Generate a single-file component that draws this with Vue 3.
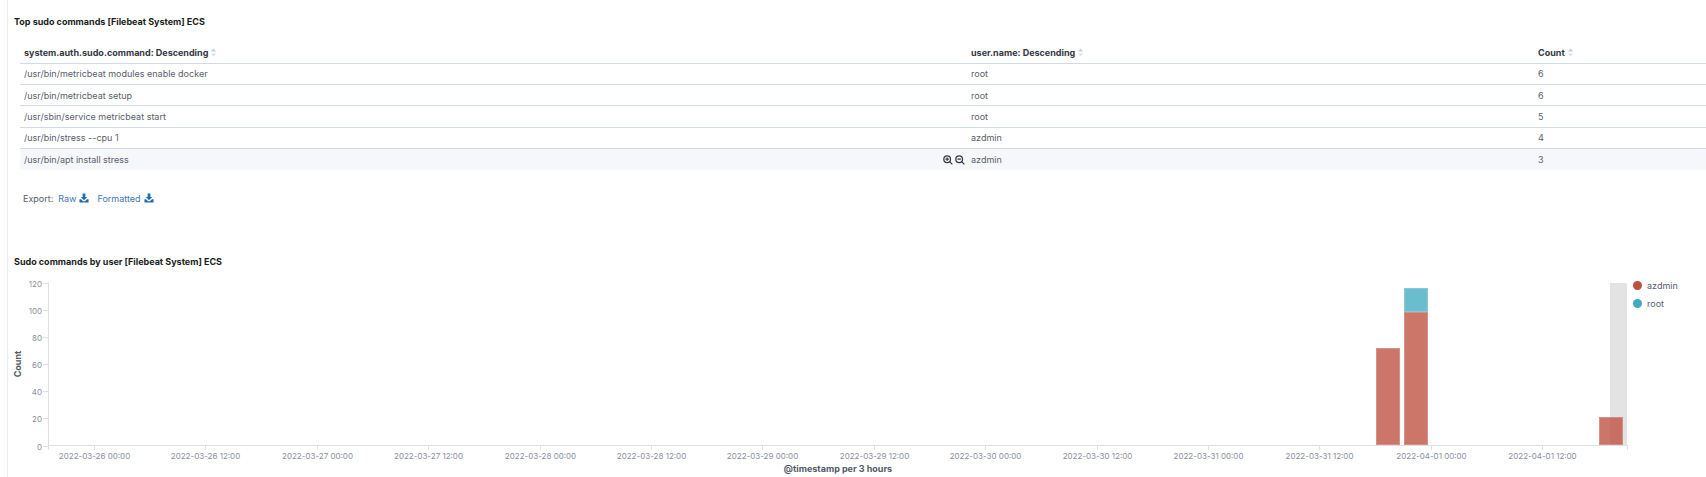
<template>
    <div class="page">
        <section class="panel-top">
            <h2 class="panel-title">Top sudo commands [Filebeat System] ECS</h2>
            <table class="data-table">
                <thead>
                    <tr>
                        <th v-for="col in columns" :key="col">
                            <span class="th-inner">
                                {{ col }}
                                <svg class="sort-icon" width="7" height="9" viewBox="0 0 7 10">
                                    <path d="M3.5 0.5 L6.5 4 L0.5 4 Z" fill="#c9d0dc" />
                                    <path d="M3.5 9.5 L6.5 6 L0.5 6 Z" fill="#dfe3ea" />
                                </svg>
                            </span>
                        </th>
                    </tr>
                </thead>
                <tbody>
                    <tr v-for="(row, i) in rows" :key="i" :class="{ hovered: i === rows.length - 1 }">
                        <td class="cell-command">
                            <span>{{ row.command }}</span>
                            <span v-if="i === rows.length - 1" class="filter-icons">
                                <svg width="10" height="10" viewBox="0 0 12 12" fill="none" stroke="#343741" stroke-width="1.5">
                                    <circle cx="5" cy="5" r="4" />
                                    <path d="M8 8 L11.2 11.2 M3 5 H7 M5 3 V7" />
                                </svg>
                                <svg width="10" height="10" viewBox="0 0 12 12" fill="none" stroke="#343741" stroke-width="1.5">
                                    <circle cx="5" cy="5" r="4" />
                                    <path d="M8 8 L11.2 11.2 M3 5 H7" />
                                </svg>
                            </span>
                        </td>
                        <td>{{ row.user }}</td>
                        <td>{{ row.count }}</td>
                    </tr>
                </tbody>
            </table>
            <div class="export-row">
                <span class="export-label">Export:</span>
                <a v-for="name in ['Raw', 'Formatted']" :key="name" class="export-link">
                    {{ name }}
                    <svg width="10" height="10" viewBox="0 0 11 11" fill="#1f6bb5">
                        <path d="M4 0.5 H7 V4.5 H9 L5.5 8 L2 4.5 H4 Z" />
                        <path d="M0.5 7 H2.2 L4.5 9 H6.5 L8.8 7 H10.5 V10.5 H0.5 Z" />
                    </svg>
                </a>
            </div>
        </section>

        <section class="panel-chart">
            <h2 class="panel-title">Sudo commands by user [Filebeat System] ECS</h2>
            <div class="chart-wrap">
                <svg class="chart" width="1621" height="212" viewBox="8 270 1621 212">
                    <!-- highlighted bucket sits behind the bars -->
                    <rect x="1610" y="284" width="17" height="162" fill="#e3e3e3" />

                    <g v-for="bar in bars" :key="bar.x + bar.fill">
                        <rect
                            :x="bar.x"
                            :y="bar.y"
                            width="24"
                            :height="bar.h"
                            :fill="bar.fill"
                            fill-opacity="0.78"
                        />
                        <rect
                            :x="bar.x + 0.5"
                            :y="bar.y + 0.5"
                            width="23"
                            :height="bar.h - 1"
                            fill="none"
                            stroke="#fff"
                            stroke-opacity="0.2"
                        />
                    </g>

                    <path d="M48.5 283.5 V451 M48 446.5 H1627.5 M1627.5 446 V451" stroke="#e0e0e0" fill="none" />

                    <g v-for="t in yTicks" :key="t.label">
                        <path :d="`M43 ${t.y} H48`" stroke="#e0e0e0" />
                        <text class="tick" x="42" :y="t.y + 3" text-anchor="end">{{ t.label }}</text>
                    </g>
                    <g v-for="t in xTicks" :key="t.label">
                        <path :d="`M${t.x} 446 V451`" stroke="#e0e0e0" />
                        <text class="tick" :x="t.x" y="460" text-anchor="middle">{{ t.label }}</text>
                    </g>

                    <text class="axis-title" transform="translate(21 365) rotate(-90)" text-anchor="middle">Count</text>
                    <text class="axis-title" x="838" y="473" text-anchor="middle">@timestamp per 3 hours</text>
                </svg>
                <ul class="legend">
                    <li v-for="item in legend" :key="item.name">
                        <span class="dot" :style="{ background: item.color }"></span>
                        {{ item.name }}
                    </li>
                </ul>
            </div>
        </section>
    </div>
</template>

<script setup>
const columns = ["system.auth.sudo.command: Descending", "user.name: Descending", "Count"];

const rows = [
    { command: "/usr/bin/metricbeat modules enable docker", user: "root", count: 6 },
    { command: "/usr/bin/metricbeat setup", user: "root", count: 6 },
    { command: "/usr/sbin/service metricbeat start", user: "root", count: 5 },
    { command: "/usr/bin/stress --cpu 1", user: "azdmin", count: 4 },
    { command: "/usr/bin/apt install stress", user: "azdmin", count: 3 },
];

const RED = "#bd4f3d";
const TEAL = "#3fabbf";

const bars = [
    { x: 1376, y: 349, h: 97, fill: RED },
    { x: 1404, y: 313, h: 133, fill: RED },
    { x: 1404, y: 289, h: 24, fill: TEAL },
    { x: 1599, y: 418, h: 28, fill: RED },
];

const yTicks = [120, 100, 80, 60, 40, 20, 0].map((v) => ({
    label: v,
    y: Math.round(446.5 - (v / 120) * 163) + 0.5,
}));

const xLabels = [
    "2022-03-26 00:00",
    "2022-03-26 12:00",
    "2022-03-27 00:00",
    "2022-03-27 12:00",
    "2022-03-28 00:00",
    "2022-03-28 12:00",
    "2022-03-29 00:00",
    "2022-03-29 12:00",
    "2022-03-30 00:00",
    "2022-03-30 12:00",
    "2022-03-31 00:00",
    "2022-03-31 12:00",
    "2022-04-01 00:00",
    "2022-04-01 12:00",
];

const xTicks = xLabels.map((label, i) => ({
    label,
    x: Math.round(94 + i * 111.4) + 0.5,
}));

const legend = [
    { name: "azdmin", color: "#bd4f3d" },
    { name: "root", color: "#3fabbf" },
];
</script>

<style scoped>
.page {
    margin-left: 7px;
    border-left: 1px solid #eeeeee;
    height: 477px;
    box-sizing: border-box;
    font-family: Inter, "Liberation Sans", sans-serif;
    overflow: hidden;
}

.panel-top {
    padding: 15px 0 0 6px;
    height: 255px;
    box-sizing: border-box;
}

.panel-title {
    margin: 0;
    font-size: 9px;
    line-height: 14px;
    font-weight: 700;
    color: #1a1c21;
}

.data-table {
    margin: 13px 0 0 6px;
    width: calc(100% - 6px);
    border-collapse: collapse;
    table-layout: fixed;
    font-size: 9px;
    color: #5a606c;
}

.data-table th:first-child,
.data-table td:first-child {
    width: 947px;
}

.data-table th:nth-child(2),
.data-table td:nth-child(2) {
    width: 567px;
}

.data-table th,
.data-table td {
    height: 21.3px;
    padding: 0 4px;
    box-sizing: border-box;
    text-align: left;
    border-bottom: 1px solid #d3dae6;
}

.data-table th {
    color: #343741;
    font-weight: 700;
}

.data-table tr.hovered td {
    background: #f5f7fa;
    border-bottom: none;
}

.th-inner {
    display: inline-flex;
    align-items: center;
    gap: 2px;
}

.cell-command {
    position: relative;
}

.filter-icons {
    position: absolute;
    right: 2px;
    top: 6px;
    display: flex;
    gap: 2px;
}

.export-row {
    display: flex;
    align-items: center;
    margin-top: 23px;
    padding-left: 9px;
    font-size: 9px;
    color: #5a606c;
}

.export-label {
    margin-right: 5px;
}

.export-link {
    display: inline-flex;
    align-items: center;
    gap: 3px;
    margin-right: 8px;
    color: #3e78b2;
}

.panel-chart {
    padding-left: 6px;
}

.chart-wrap {
    display: flex;
    align-items: flex-start;
}

.chart {
    display: block;
    margin-left: -6px;
    flex: none;
}

.tick {
    font-size: 8px;
    fill: #8a8f9c;
    font-family: Inter, "Liberation Sans", sans-serif;
}

.axis-title {
    font-size: 9px;
    font-weight: 700;
    fill: #535966;
    font-family: Inter, "Liberation Sans", sans-serif;
}

.legend {
    list-style: none;
    margin: 7px 0 0 4px;
    padding: 0;
    font-size: 9px;
    color: #5a606c;
}

.legend li {
    display: flex;
    align-items: center;
    gap: 5px;
    height: 18px;
}

.dot {
    width: 9px;
    height: 9px;
    border-radius: 50%;
}
</style>
